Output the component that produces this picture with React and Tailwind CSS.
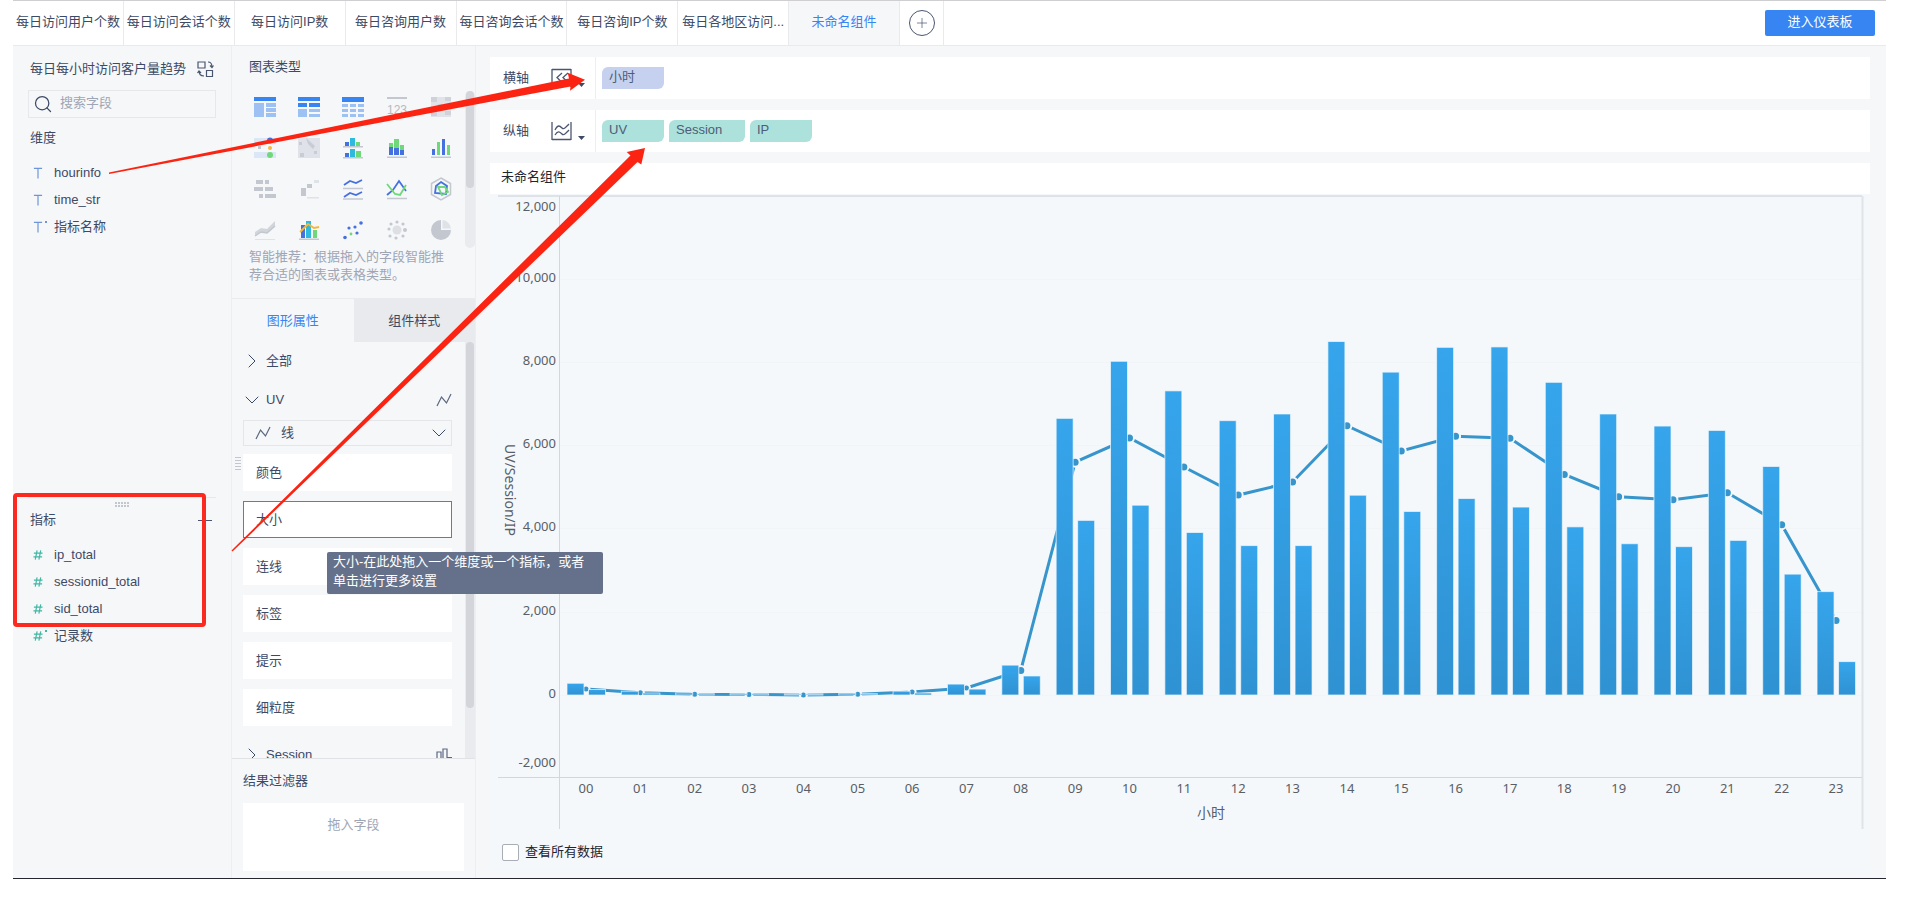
import { useState } from 'react';
import { Search, ChevronDown, ChevronRight, Plus } from 'lucide-react';

const TABS = [
  '每日访问用户个数',
  '每日访问会话个数',
  '每日访问IP数',
  '每日咨询用户数',
  '每日咨询会话个数',
  '每日咨询IP个数',
  '每日各地区访问...',
  '未命名组件',
];

const DIMENSIONS = [
  { name: 'hourinfo', mark: 'T' },
  { name: 'time_str', mark: 'T' },
  { name: '指标名称', mark: 'T', calc: true },
];

const MEASURES = [
  { name: 'ip_total', mark: '#' },
  { name: 'sessionid_total', mark: '#' },
  { name: 'sid_total', mark: '#' },
  { name: '记录数', mark: '#', calc: true },
];

const UV = [145, 55, 20, 15, 0, 20, 70, 170, 590, 5590, 6170, 5475, 4800, 5115, 6465, 5860, 6210, 6165, 5295, 4760, 4690, 4855, 4090, 1790];
const SESSION = [270, 80, 40, 20, 15, 30, 80, 250, 705, 6630, 8000, 7290, 6575, 6735, 8475, 7740, 8335, 8345, 7495, 6735, 6445, 6340, 5475, 2470];
const IP = [120, 35, 20, 20, 15, 20, 35, 130, 445, 4180, 4545, 3890, 3575, 3575, 4785, 4395, 4705, 4500, 4025, 3620, 3550, 3700, 2890, 790];

const BLUE = '#3685f2';
const LIGHT = '#9dc1f3';
const CYAN = '#2fb9dd';
const INDIGO = '#4470e0';
const GREEN = '#6fd878';
const GRAY = '#c3c7cf';

const CHART_ICONS = [
  { label: '分组表', art: <><path fill={BLUE} d="M0 0h22v4H0z" /><path fill={LIGHT} d="M0 6h10v14H0zM12 6h10v4H12zM12 11h10v4H12zM12 16h10v4H12z" /></> },
  { label: '交叉表', art: <><path fill={BLUE} d="M0 0h22v4H0zM0 6h9v4H0zM11 6h11v4H11z" /><path fill={LIGHT} d="M0 12h9v8H0zM11 12h11v3H11zM11 17h11v3H11z" /></> },
  { label: '明细表', art: <><path fill={BLUE} d="M0 0h22v5H0z" /><path fill={LIGHT} d="M0 7h6v3H0zM8 7h6v3H8zM16 7h6v3h-6zM0 12h6v3H0zM8 12h6v3H8zM16 12h6v3h-6zM0 17h6v3H0zM8 17h6v3H8zM16 17h6v3h-6z" /></> },
  { label: 'KPI指标卡', art: <><path fill={GRAY} d="M1 0h20v2H1z" /><text x="11" y="17" textAnchor="middle" fontSize="12" fill="#b4b9c3">123</text></> },
  { label: '颜色表格', art: <><path fill="#e1e3e8" d="M1 0h20v20H1z" /><path fill={GRAY} d="M1 0h6v5H1zM8 7h6v5H8zM15 0h6v4h-6zM1 14h6v5H1zM15 14h6v4h-6z" opacity=".6" /></> },
  { label: '聚合气泡图', art: <><path fill="#dbe7f7" d="M0 0h22v6H0zM0 14h22v6H0z" /><path fill={GRAY} d="M4 8h3v3H4z" /><circle cx="16" cy="2.500" r="3" fill={INDIGO} /><circle cx="16" cy="10" r="2" fill="#f6b73c" /><circle cx="16" cy="17" r="3" fill={GREEN} /></> },
  { label: '热力图', art: <><path fill="#dfe2e9" d="M0 0h22v20H0z" /><path fill={GRAY} d="M8 0l9 8-2 3-5-5zM1 4h3v3H1zM2 15h4v4H2zM16 13h3v3h-3z" opacity=".8" /></> },
  { label: '分区柱形图', art: <><path fill={GRAY} d="M1 8h20v1.500H1zM1 19h20v1.500H1z" /><path fill={INDIGO} d="M3 4h4v4H3zM3 15h4v4H3z" /><path fill={CYAN} d="M8 0h5v8H8zM8 11h5v8H8z" /><path fill={GREEN} d="M14 4h4v4h-4zM14 13h5v6h-5z" /></> },
  { label: '堆积柱形图', art: <><path fill={GRAY} d="M1 18.500h20V20H1z" /><path fill={GREEN} d="M3 5h4v4H3zM8 1h5v9H8zM14 7h4v5h-4z" /><path fill={INDIGO} d="M3 9h4v8H3zM8 10h5v7H8zM14 12h4v5h-4z" /></> },
  { label: '多系列柱形图', art: <><path fill={GRAY} d="M1 18.500h20V20H1z" /><path fill={INDIGO} d="M2 11h3v6H2zM12 1h3v16h-3z" /><path fill={GREEN} d="M7 4h3v13H7zM17 7h3v10h-3z" /></> },
  { label: '对比条形图', art: <path fill={GRAY} d="M2 1h7v4H2zM11 1h4v4h-4zM0 8h9v4H0zM11 8h8v4h-8zM5 15h4v4H5zM11 15h11v4H11z" /> },
  { label: '瀑布图', art: <><path fill={GRAY} d="M3 9h5v8H3zM9 5h5v4H9z" /><path fill="#dfe2e7" d="M16 1h5v3h-5zM9 18h12v1.500H9z" /></> },
  { label: '分区折线图', art: <><path stroke={GRAY} strokeWidth="1.500" d="M1 9.500h20M1 20h20" /><path fill="none" stroke={INDIGO} strokeWidth="1.800" d="M2 6l6-4 6 2 6-3M2 18l6-4 6 2 6-3" /></> },
  { label: '多系列折线图', art: <><path stroke={GRAY} strokeWidth="1.500" d="M1 19.500h20" /><path fill="none" stroke={INDIGO} strokeWidth="1.800" d="M1 16l6-5 6-9 7 10" /><path fill="none" stroke={GREEN} strokeWidth="1.800" d="M1 5l8 10 5 1 6-10" /></> },
  { label: '雷达图', art: <><path fill="none" stroke={GRAY} strokeWidth="1.500" d="M11 -1l9.500 5.500v11L11 21l-9.500-5.500v-11z" /><path fill="none" stroke={INDIGO} strokeWidth="1.800" d="M11 3l6 4-1 8-11-1 1-7z" /><path fill="none" stroke={GREEN} strokeWidth="1.800" d="M8 8l7 0 3 5-6 3z" /></> },
  { label: '面积图', art: <><path fill={GRAY} d="M1 12l6-4 6 1 8-8v5l-8 7-6-1-6 4z" opacity=".7" /><path fill="none" stroke={GRAY} strokeWidth="1.500" d="M1 16l6-4 6 1 8-7" /><path stroke="#dfe2e7" d="M1 19.500h20" /></> },
  { label: '组合图', art: <><path fill={GRAY} d="M1 18.500h20V20H1z" /><path fill={INDIGO} d="M3 5h4v13H3z" /><path fill={CYAN} d="M8 1h5v17H8z" /><path fill={GREEN} d="M15 10h4v8h-4z" /><path fill="none" stroke="#f6b73c" strokeWidth="1.800" d="M2 12l8-8 6 4 5-1" /></> },
  { label: '散点图', art: <><g fill={INDIGO}><circle cx="3" cy="17.500" r="1.800" /><circle cx="7" cy="8" r="1.600" /><circle cx="13" cy="7" r="1.600" /><circle cx="15" cy="13" r="1.600" /><circle cx="19" cy="3" r="1.800" /></g><circle cx="9" cy="14" r="1.400" fill={GREEN} /></> },
  { label: '点地图', art: <g fill={GRAY}><circle cx="11" cy="10" r="4.500" opacity=".5" /><circle cx="11" cy="2" r="1.600" /><circle cx="17" cy="4" r="1.600" /><circle cx="19" cy="10" r="2" /><circle cx="17" cy="16" r="1.600" /><circle cx="10" cy="18" r="1.600" /><circle cx="4" cy="16" r="1.600" /><circle cx="3" cy="9" r="1.600" /><circle cx="5" cy="4" r="1.600" /></g> },
  { label: '饼图', art: <><path fill={GRAY} d="M11 0a10 10 0 1 0 10 10H11z" /><path fill="#dfe2e7" d="M12.500 0a9.500 9.500 0 0 1 8.500 8.500h-8.500z" /></> },
];

const PROPS = ['颜色', '大小', '连线', '标签', '提示', '细粒度'];

function LineMark() {
  return (
    <svg width="16" height="14" viewBox="0 0 16 14" fill="none" stroke="#5c6880" strokeWidth="1.200">
      <path d="M1 13L5.500 4l5 6L15 1" />
    </svg>
  );
}

function FieldList({ items, color }) {
  return (
    <ul>
      {items.map((f) => (
        <li key={f.name} className="flex h-[27px] items-center gap-[11px] pl-[5px]">
          <span className="relative flex w-[10px] justify-center">
            <svg width="11" height="12" viewBox="0 0 11 12" fill="none" stroke={color} strokeWidth="1.300">
              {f.mark === 'T' ? <path d="M1 1h9M5.500 1v11" /> : <path d="M4.500 1L2.500 11M8.500 1l-2 10M1 4h9.500M.5 8h9.500" />}
            </svg>
            {f.calc && <span className="absolute -right-1 top-0 h-[2px] w-[2px]" style={{ backgroundColor: color }} />}
          </span>
          {f.name}
        </li>
      ))}
    </ul>
  );
}

function Chip({ children, tone }) {
  return (
    <span className={`h-[22px] rounded-br-md rounded-tl-md px-[7px] leading-[19px] text-[#4d5d78] ${tone}`}>{children}</span>
  );
}

function AxisRow({ label, icon, children }) {
  return (
    <div className="flex h-[42px] bg-white">
      <div className="flex w-[106px] items-center border-r border-[#eceef1] pl-[13px]">
        <span className="w-[48px]">{label}</span>
        <svg width="21" height="20" viewBox="0 0 21 20" fill="none" stroke="#4a5670" strokeWidth="1.300">
          {icon}
        </svg>
        <svg className="ml-[6px] mt-[14px]" width="7" height="4" viewBox="0 0 7 4" fill="#3d4a66">
          <path d="M0 0h7L3.500 4z" />
        </svg>
      </div>
      <div className="flex items-center gap-[5px] pl-[6px]">{children}</div>
    </div>
  );
}

function Chart() {
  const zero = 501;
  const x = (i) => 96 + i * 54.35;
  const y = (v) => zero - (v / 2000) * 83.3;
  const ticks = [12000, 10000, 8000, 6000, 4000, 2000, 0, -2000];

  return (
    <svg viewBox="0 0 1380 638" className="block h-auto w-full" fontFamily='"Noto Sans", "Noto Sans CJK SC", sans-serif' fontSize="13" fill="#5a5e66">
      <defs>
        <linearGradient id="bar" x1="0" y1="0" x2="0" y2="1">
          <stop offset="0" stopColor="#36a5ec" />
          <stop offset="1" stopColor="#2f92d2" />
        </linearGradient>
      </defs>

      {ticks.slice(1, 7).map((t) => (
        <path key={t} d={`M70 ${Math.round(y(t)) + 0.5}H1372`} stroke="#f1f5f8" />
      ))}
      <path d="M8 2H1372" stroke="#dfe2e6" strokeWidth="2" />
      <path d="M1372.500 2V635" stroke="#e0e3e7" strokeWidth="2" />
      <path d="M69.500 2V635M8 583.500H1372" stroke="#d3d7db" />

      {ticks.map((t) => {
        const cy = t === 12000 ? 13 : t === -2000 ? 569 : y(t) - 1;
        return (
          <text key={t} x="66" y={cy + 4} textAnchor="end">
            {t.toLocaleString('en-US')}
          </text>
        );
      })}

      <polyline points={UV.map((v, i) => `${x(i)},${y(v)}`).join(' ')} fill="none" stroke="#3795cc" strokeWidth="3" />
      {UV.map((v, i) => (
        <circle key={i} cx={x(i)} cy={y(v)} r={i < 8 ? 3.5 : 4.5} fill="#3795cc" stroke="#f4f8fb" strokeWidth="2" />
      ))}
      <g fill="url(#bar)" stroke="#f4f8fb" strokeOpacity=".7">
        {SESSION.map((v, i) => (
          <rect key={i} x={x(i) - 19} y={y(v) - 0.5} width="17" height={zero - y(v) + 0.5} />
        ))}
        {IP.map((v, i) => (
          <rect key={i} x={x(i) + 2.5} y={y(v) - 0.5} width="17" height={zero - y(v) + 0.5} />
        ))}
      </g>

      {UV.map((_, i) => (
        <text key={i} x={x(i)} y="599" textAnchor="middle">
          {String(i).padStart(2, '0')}
        </text>
      ))}
      <text x="721" y="624" textAnchor="middle" fontSize="14">小时</text>
      <text x="0" y="0" textAnchor="middle" fontSize="14" transform="translate(15 296) rotate(90)">UV/Session/IP</text>
    </svg>
  );
}

export default function App() {
  const [active, setActive] = useState(7);
  const [prop, setProp] = useState('大小');
  const [keyword, setKeyword] = useState('');
  const [showAll, setShowAll] = useState(false);

  return (
    <div className="min-h-screen bg-white pl-[13px] pr-[19px] font-['Liberation_Sans','Noto_Sans_CJK_SC',sans-serif] text-[13px] leading-5 text-[#3d4a66]">
      <div className="relative border-b border-[#26262e] bg-[#f6f7f9]">
        {/* Component tabs */}
        <header className="flex h-[46px] items-stretch border-b border-t border-b-[#e8eaed] border-t-[#cfcfd2] bg-white">
          <nav className="flex w-[887px] shrink-0">
            {TABS.map((t, i) => (
              <button
                key={t}
                onClick={() => setActive(i)}
                className={`min-w-0 flex-1 whitespace-nowrap border-r border-[#e8eaed] pb-[2px] ${i === active ? 'bg-[#f6f7f9] text-[#3685f2]' : ''}`}
              >
                {t}
              </button>
            ))}
          </nav>
          <div className="flex w-[44px] items-center justify-center border-r border-[#e8eaed]">
            <button aria-label="添加组件" className="flex h-[26px] w-[26px] items-center justify-center rounded-full border border-[#4a5670]">
              <Plus size={16} strokeWidth={1} />
            </button>
          </div>
          <button className="ml-auto mr-[11px] h-[26px] w-[110px] self-center rounded-xs bg-[#3685f2] pb-[2px] text-white">进入仪表板</button>
        </header>

        <div className="flex">
          {/* Fields */}
          <aside className="w-[218px] shrink-0 px-[15px]">
            <div className="h-[451px] pt-[13px]">
              <div className="flex items-center justify-between pl-[2px]">
                <h2>每日每小时访问客户量趋势</h2>
                <button aria-label="切换数据" className="mr-[2px]">
                  <svg width="17" height="17" viewBox="0 0 17 17" fill="none" stroke="#4a5670" strokeWidth="1.200">
                    <path d="M1 1h7v6H1zM9.500 9.500h6v6h-6zM11 1c3 0 4 2 4 5M13 4.500l2 2 1.500-2M2 10c0 3 1.500 5 5 5M.5 12L2 10l2 2" />
                  </svg>
                </button>
              </div>
              <label className="mt-[11px] flex h-[28px] items-center border border-[#e6e8eb] pl-[4px]">
                <Search size={20} strokeWidth={1.5} className="shrink-0" />
                <input
                  value={keyword}
                  onChange={(e) => setKeyword(e.target.value)}
                  placeholder="搜索字段"
                  aria-label="搜索字段"
                  className="ml-[7px] h-[26px] w-full min-w-0 bg-transparent pb-[3px] outline-none placeholder:text-[#9ea6b5]"
                />
              </label>
              <h3 className="mb-[11px] mt-[10px] pl-[2px]">维度</h3>
              <FieldList items={DIMENSIONS} color="#6f95d8" />
            </div>

            <div className="border-t border-[#e6e8eb] pt-[4px]">
              <svg className="mx-auto block" width="15" height="5" viewBox="0 0 15 5">
                <path d="M0 1h15M0 4h15" stroke="#8d95a5" strokeDasharray="2 1" />
              </svg>
              <div className="mb-[11px] mt-[3px] flex items-center justify-between pl-[2px] pr-[4px]">
                <h3>指标</h3>
                <button aria-label="添加指标">
                  <svg width="14" height="14" viewBox="0 0 14 14" stroke="#4a5670">
                    <path d="M0 7.500h14M7.500 1v12" />
                  </svg>
                </button>
              </div>
              <FieldList items={MEASURES} color="#3fb8a4" />
            </div>
          </aside>

          {/* Chart type and properties */}
          <aside className="relative w-[245px] shrink-0 border-x border-[#eceef1]">
            <section className="relative pt-[11px]">
              <h2 className="pl-[17px]">图表类型</h2>
              <div className="mt-[9px] grid h-[162px] auto-rows-[41px] grid-cols-[repeat(5,44px)] overflow-hidden pl-[11px]">
                {CHART_ICONS.map((c) => (
                  <button key={c.label} aria-label={c.label} className="flex items-center justify-center">
                    <svg width="22" height="20" viewBox="0 0 22 20" className="overflow-visible">
                      {c.art}
                    </svg>
                  </button>
                ))}
              </div>
              <p className="pb-[14px] pl-[17px] pr-[26px] leading-[18px] text-[#9ea6b5]">
                智能推荐：根据拖入的字段智能推荐合适的图表或表格类型。
              </p>
              <div className="absolute right-0 top-[45px] h-[157px] w-[10px] rounded-full bg-[#eaebee]">
                <div className="mx-px h-[97px] rounded-full bg-[#d3d5da]" />
              </div>
            </section>

            <div className="grid h-[44px] grid-cols-2 border-t border-[#e8eaed]">
              <button className="text-[#3685f2]">图形属性</button>
              <button className="bg-[#e8eaed]">组件样式</button>
            </div>

            <section className="relative h-[416px] overflow-hidden pl-[11px] pr-[23px]">
              <button className="-ml-[3px] mt-[9px] flex h-[20px] items-center gap-[2px]">
                <ChevronRight size={24} strokeWidth={1} />
                全部
              </button>
              <div className="mt-[19px] flex h-[20px] items-center justify-between">
                <button className="-ml-[3px] flex items-center gap-[2px]">
                  <ChevronDown size={24} strokeWidth={1} />
                  UV
                </button>
                <LineMark />
              </div>
              <div className="relative mt-[10px]">
                <select aria-label="图形类型" className="block h-[26px] w-full appearance-none border border-[#e4e6ea] bg-transparent pl-[37px]">
                  <option>线</option>
                  <option>柱形图</option>
                </select>
                <span className="pointer-events-none absolute left-[12px] top-[6px]"><LineMark /></span>
                <ChevronDown size={24} strokeWidth={1} className="pointer-events-none absolute right-px top-px" />
              </div>
              <div className="mt-[8px] flex flex-col gap-[10px]">
                {PROPS.map((p) => (
                  <button
                    key={p}
                    onClick={() => setProp(p)}
                    className={`h-[37px] border bg-white pl-[12px] text-left ${p === prop ? 'border-[#4a7fd6]' : 'border-white'}`}
                  >
                    {p}
                  </button>
                ))}
              </div>
              <div className="mt-[19px] flex h-[20px] items-center justify-between">
                <button className="-ml-[3px] flex items-center gap-[2px]">
                  <ChevronRight size={24} strokeWidth={1} />
                  Session
                </button>
                <svg width="16" height="14" viewBox="0 0 16 14" fill="none" stroke="#5c6880" strokeWidth="1.200">
                  <path d="M1 13V4h4v9zM7 13V1h4v12M11 9.500h5" />
                </svg>
              </div>
              <div className="absolute right-0 top-0 h-full w-[10px] bg-[#eaebee]">
                <div className="mx-px h-[366px] rounded-full bg-[#d3d5da]" />
              </div>
            </section>

            <section className="border-t border-[#e0e2e6] px-[11px] pb-[7px] pt-[12px]">
              <h2>结果过滤器</h2>
              <div className="mt-[12px] h-[68px] bg-white pt-[12px] text-center text-[#9ea6b5]">拖入字段</div>
            </section>

            <svg className="absolute left-[3px] top-[411px]" width="6" height="15" viewBox="0 0 6 15">
              <path d="M1 0v15M3 0v15M5 0v15" stroke="#8d95a5" strokeDasharray="1 2" />
            </svg>
            <div role="tooltip" className="absolute left-[95px] top-[506px] z-10 w-[276px] rounded-xs bg-[#65718a] px-[6px] pb-[4px] leading-[19px] text-white">
              大小-在此处拖入一个维度或一个指标，或者单击进行更多设置
            </div>
          </aside>

          {/* Canvas */}
          <main className="min-w-0 flex-1 pl-[14px] pr-[16px] pt-[11px]">
            <div className="flex flex-col gap-[11px]">
              <AxisRow label="横轴" icon={<path d="M1 1.500h19M1 1v18M20 1v18M11 5L6 9.500l5 5M17 5l-5 4.500 5 5" />}>
                <Chip tone="w-[62px] bg-[#c5d1ef]">小时</Chip>
              </AxisRow>
              <AxisRow label="纵轴" icon={<path d="M1 1v18M20 1v18M1 18.500h19M4 9c3-6 5-4 7-2s4-1 7-4M4 14c3-5 5-3 7-1s4-1 7-4" />}>
                <Chip tone="w-[62px] bg-[#ace1dc]">UV</Chip>
                <Chip tone="w-[76px] bg-[#ace1dc]">Session</Chip>
                <Chip tone="w-[62px] bg-[#ace1dc]">IP</Chip>
              </AxisRow>
              <h1 className="h-[31px] bg-white pl-[11px] leading-[28px] text-[#1f2530]">未命名组件</h1>
            </div>
            <div className="bg-[#f4f8fb]">
              <Chart />
              <label className="flex w-max items-center gap-[6px] pb-[12px] pl-[12px] pt-[10px] text-[#1f2530]">
                <input
                  type="checkbox"
                  checked={showAll}
                  onChange={(e) => setShowAll(e.target.checked)}
                  className="h-[17px] w-[17px] appearance-none rounded-xs border border-[#a9adb5] bg-white checked:bg-[#3685f2]"
                />
                查看所有数据
              </label>
            </div>
          </main>
        </div>

        {/* Drag hints drawn over the editor */}
        <div className="pointer-events-none absolute left-0 top-[493px] z-20 h-[134px] w-[193px] rounded border-4 border-[#fb2a20]" />
        <svg className="pointer-events-none absolute left-0 top-0 z-20" width="640" height="560" viewBox="13 0 640 560" fill="#fb2412">
          <path d="M109 172.500L569 78.500L567.700 72.700L585 79.700L570 90.700L570.500 86.500L109 174z" />
          <path d="M231.500 550.500L630.500 155.500L626.700 152L645 148L641.300 164.500L637.500 162L232.500 551.500z" />
        </svg>
      </div>
    </div>
  );
}
